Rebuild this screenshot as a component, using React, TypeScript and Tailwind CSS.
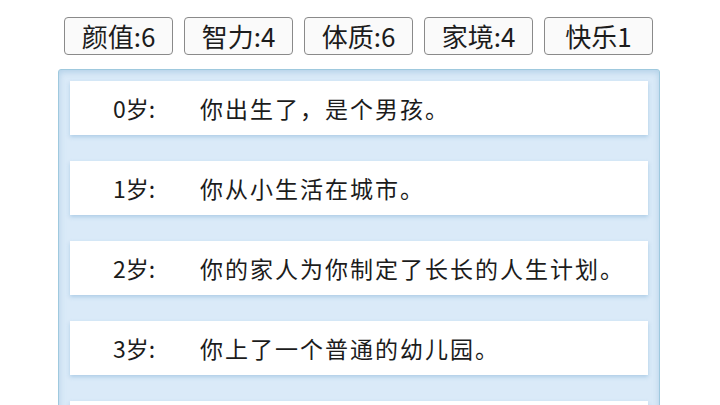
import React from 'react';

const stats = ['颜值:6', '智力:4', '体质:6', '家境:4', '快乐1'];

const events = [
  { age: '0岁:', text: '你出生了，是个男孩。' },
  { age: '1岁:', text: '你从小生活在城市。' },
  { age: '2岁:', text: '你的家人为你制定了长长的人生计划。' },
  { age: '3岁:', text: '你上了一个普通的幼儿园。' },
  { age: '', text: '' },
];

const App: React.FC = () => {
  return (
    <div
      className="w-[720px] h-[405px] overflow-hidden bg-white text-[#1c1c1c]"
      style={{ fontFamily: '"Noto Sans CJK SC", "Noto Sans", sans-serif' }}
    >
      {/* stat buttons */}
      <div className="flex gap-[11px] pl-[64px] pt-[17px]">
        {stats.map((s) => (
          <div
            key={s}
            className="w-[109px] h-[38px] flex items-center justify-center rounded-[4px] border border-[#8a8a8a] bg-[#fafafa] text-[26px] leading-none"
          >
            {s}
          </div>
        ))}
      </div>

      {/* life log */}
      <div className="ml-[58px] mt-[14px] w-[602px] h-[400px] rounded-t-[3px] border border-[#9fc9de] bg-[#daeaf8] shadow-[inset_0_2px_6px_rgba(150,190,220,0.6)] px-[11px] pt-[11px]">
        <div className="flex flex-col gap-[26px]">
          {events.map((e, i) => (
            <div
              key={i}
              className="h-[54px] flex items-center bg-white shadow-[0_2px_4px_rgba(120,170,210,0.45)] text-[23px]"
            >
              <span className="w-[130px] pl-[43px]">{e.age}</span>
              <span className="tracking-[2px]">{e.text}</span>
            </div>
          ))}
        </div>
      </div>
    </div>
  );
};

export default App;
